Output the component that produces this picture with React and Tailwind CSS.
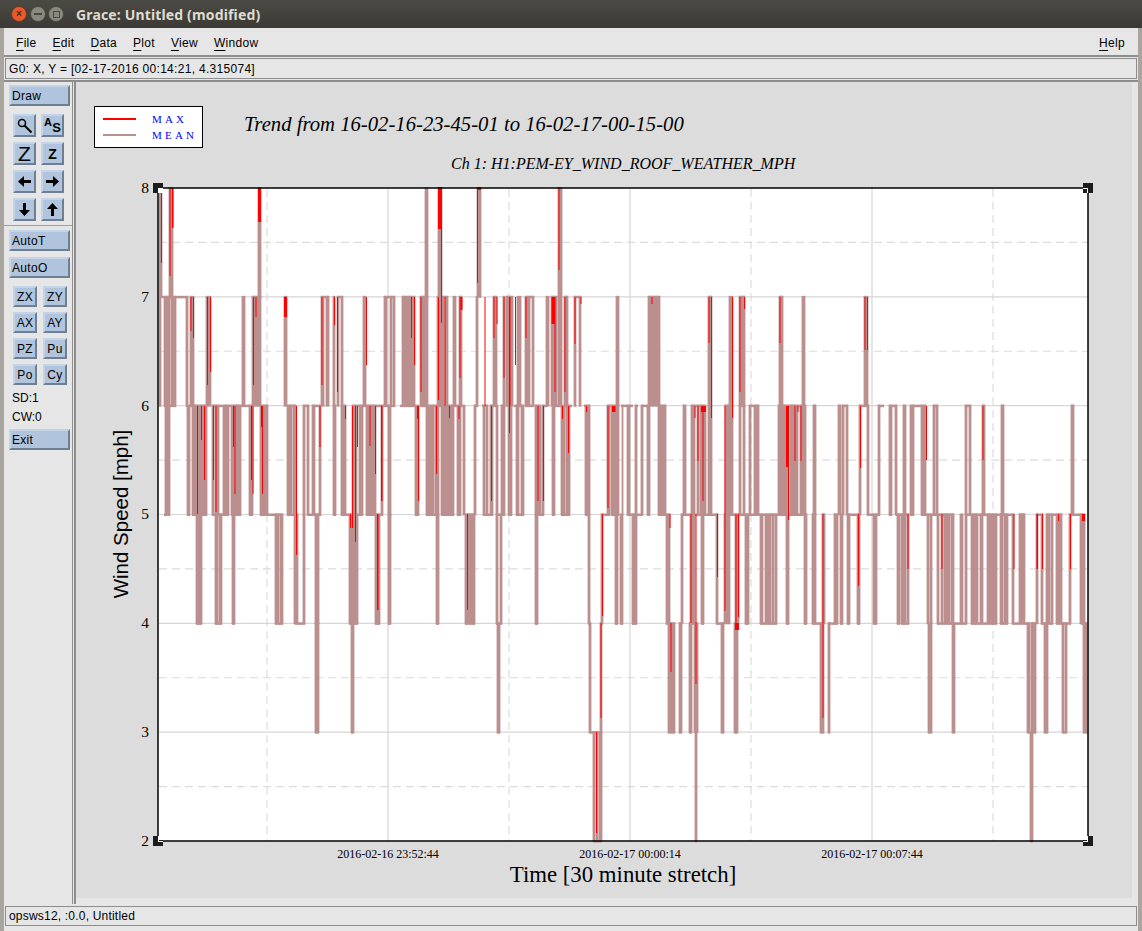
const sans = "font-['Liberation_Sans',Arial,sans-serif]";
const serif = "'Liberation Serif', 'Times New Roman', serif";

const y = (v) => 188 + (8 - v) * 108.83;

// mean trace, vertical strokes per band: [upper, lower, [[x1, x2], ...]]
const bands = [
  [8, 7, [[159,162],[169,173],[258,261],[425,428],[438,442],[477,481],[558,562]]],
  [7, 6, [[159,161],[164,170],[171,176],[186,188],[190,194],[206,211],[242,245],[252,258],[258,261],[284,287],[321,324],[326,329],[333,335],[337,339],[341,343],[363,366],[384,387],[390,392],[393,395],[402,415],[420,428],[437,444],[445,448],[453,456],[459,462],[476,478],[493,497],[503,505],[506,513],[517,521],[525,530],[532,534],[546,549],[551,557],[558,562],[564,568],[574,576],[579,581],[616,619],[648,660],[708,712],[729,733],[739,745],[779,783],[802,805],[864,868]]],
  [6, 5, [[165,170],[187,190],[192,196],[196,207],[212,214],[215,219],[223,229],[231,237],[237,241],[249,253],[260,268],[287,292],[293,296],[303,305],[307,309],[312,315],[319,321],[333,336],[341,346],[352,357],[359,363],[366,369],[369,376],[381,383],[388,391],[415,419],[426,434],[435,439],[441,447],[447,454],[457,461],[463,465],[474,476],[483,485],[486,488],[490,493],[496,498],[501,505],[508,512],[516,519],[521,524],[535,541],[542,544],[552,555],[561,565],[566,570],[585,590],[607,610],[611,619],[622,623],[627,630],[635,637],[641,643],[647,650],[658,666],[683,686],[691,695],[697,699],[700,706],[708,712],[725,733],[739,741],[743,745],[749,751],[754,759],[778,782],[782,789],[790,798],[800,803],[803,806],[813,816],[838,841],[842,844],[846,848],[859,861],[867,869],[878,880],[889,892],[895,897],[903,906],[910,914],[921,926],[933,935],[936,938],[965,967],[969,971],[982,985],[1001,1004],[1071,1074]]],
  [5, 4, [[196,202],[215,218],[219,222],[232,235],[275,279],[280,283],[294,298],[303,305],[315,319],[349,352],[352,358],[375,380],[388,391],[436,439],[465,475],[496,498],[500,502],[535,538],[588,590],[601,603],[615,618],[620,623],[632,637],[666,670],[681,683],[690,695],[701,704],[716,718],[724,730],[735,739],[745,749],[760,763],[765,771],[772,774],[775,777],[786,789],[804,807],[812,816],[822,825],[834,838],[840,843],[847,850],[857,860],[873,877],[897,900],[901,906],[907,909],[927,929],[930,932],[937,939],[941,943],[944,950],[951,954],[960,963],[965,967],[971,974],[974,978],[980,983],[987,997],[1000,1003],[1004,1008],[1012,1014],[1019,1025],[1036,1038],[1041,1043],[1046,1050],[1051,1053],[1056,1062],[1069,1071],[1080,1085]]],
  [4, 3, [[315,319],[351,354],[497,500],[589,591],[600,602],[668,675],[679,682],[689,692],[694,698],[721,724],[734,738],[820,824],[828,830],[928,932],[952,955],[1027,1030],[1031,1036],[1044,1048],[1062,1064],[1065,1067],[1083,1087]]],
  [3, 2, [[593,595],[596,598],[599,602],[695,697],[1030,1033]]],
];

// mean trace, horizontal runs per level
const runs = [
  [7, [[162,188],[252,258],[321,329],[337,343],[384,395],[402,415],[420,428],[437,447],[459,462],[493,497],[506,513],[525,534],[551,557],[564,568],[574,581],[648,660],[708,712],[739,745],[779,783]]],
  [6, [[164,176],[186,207],[212,236],[236,253],[260,268],[287,296],[303,309],[312,321],[333,336],[341,346],[352,395],[400,415],[420,428],[428,463],[474,478],[482,488],[490,497],[501,505],[514,524],[525,534],[535,540],[542,547],[552,562],[564,572],[584,590],[607,617],[621,633],[635,638],[641,650],[658,666],[683,686],[691,706],[708,712],[724,733],[739,745],[749,759],[778,806],[813,816],[838,841],[842,848],[859,869],[878,884],[889,897],[903,906],[910,926],[933,938],[965,971],[982,985],[1001,1004],[1071,1074]]],
  [5, [[164,170],[187,190],[192,207],[212,229],[231,241],[249,253],[260,283],[287,296],[307,321],[333,336],[341,352],[354,363],[366,383],[388,391],[415,419],[426,439],[441,454],[457,461],[465,475],[483,493],[496,505],[508,512],[516,524],[535,544],[552,555],[561,570],[585,590],[601,610],[611,619],[627,643],[647,650],[658,670],[681,718],[724,807],[812,816],[822,825],[834,838],[840,843],[847,860],[867,880],[889,892],[896,909],[910,914],[921,954],[965,971],[972,1014],[1019,1025],[1036,1043],[1046,1062],[1069,1085]]],
  [4, [[196,202],[215,222],[232,235],[275,283],[295,305],[315,319],[349,358],[375,380],[388,391],[436,439],[465,475],[496,502],[535,538],[588,591],[601,603],[615,618],[620,623],[632,637],[666,675],[679,682],[689,698],[701,704],[716,724],[735,739],[745,749],[760,777],[786,789],[804,807],[812,824],[828,838],[840,843],[847,850],[857,860],[873,877],[897,900],[901,909],[928,932],[937,967],[971,997],[1000,1008],[1012,1030],[1031,1036],[1041,1053],[1056,1071],[1081,1087]]],
  [3, [[315,319],[351,354],[497,500],[589,602],[668,675],[679,682],[689,692],[721,724],[734,738],[820,824],[828,830],[928,932],[952,955],[1027,1036],[1044,1048],[1062,1067],[1083,1087]]],
  [2, [[593,602],[695,697],[1030,1033]]],
];

// max trace where it shows past the mean: [x, top, bottom, width]
const maxMarks = [
  [161,188,263,1],[169.5,188,276,1],[172,188,228,1.5],[258,188,222,3],[438,187,229,3],[441,187,323,1],[477,187,283,1],[478,187,190,3],[558.5,187,270,1],
  [190.5,297,331,1],[193,297,338,1],[207,297,385,1],[210,297,372,1],[253,297,385,1],[255.5,297,317,1],[284,297,317,3],[321.5,297,385,1],[334,297,325,1],[337,297,392,1],[366,297,365,1],
  [411,297,338,1],[414,297,365,1],[420.5,297,392,1],[438,297,400,1],[444.5,297,406,1],[460.5,297,310,2],[459.5,297,378,1],[484.5,297,406,1],[493.5,297,338,1],[496.5,297,324,1],[503.5,297,378,1],[509,297,406,1.5],[515,297,365,1],[525.5,297,338,1],[551.5,297,324,3.5],[554.5,297,392,1],[564.5,297,392,1],[574.5,297,344,1],[580.5,297,304,1],[651.5,297,304,1],
  [708.5,297,343,1],[711,297,418,1],[732,297,418,1],[739.5,297,392,1],[744,297,309,1],[779.5,297,343,1],[864.5,297,350,1],[867,297,350,1],
  [197,406,514,1],[201,406,440,1],[204,406,480,1],[213,406,480,1],[215.5,406,512,1],[233,406,447,1],[234.5,406,494,1],[251,406,480,1],[252.5,406,494,1],[261,406,427,1],[262,406,494,1],[296,406,555,1],[319.5,406,447,1],[345,406,419,1],[352,406,528,1],[355,406,542,1],[357,406,447,1],[369.5,406,446,1],[375,406,474,1],[381,406,501,1.5],[377,514,610,1.5],[350,514,528,1],
  [417,406,419,2],[418,406,501,1],[436,406,474,1],[449,406,418,1],[458.5,406,419,1],[491,406,501,1],[509,395,433,1],[537.5,406,501,1],[543,406,501,1],[562,406,419,1],[568,406,453,1],[586,406,412,1],[607.5,406,508,1],[612,406,412,3.5],[467,514,610,1],[602,514,616,1],[600.5,623,718,1],[596,732,833,1],
  [694.5,406,418,1],[697.5,406,461,1],[701,406,412,5],[702.5,406,501,1],[724.5,406,611,1],[786,406,467,2.5],[788,406,520,1],[794.5,406,461,1],[797.5,406,412,1],[800.5,406,461,1],[860,406,468,1],
  [669.5,514,528,1],[670.5,623,672,1],[690.5,514,623,1],[695.5,514,684,1],[717,514,577,1],[735.5,514,630,1],[735,623,630,4],[738,514,617,1],[822.5,514,718,1],[858,514,586,1],
  [926,406,460,1],[982.5,406,460,1],[907.5,514,569,1],[941.5,514,569,1],[1013.5,514,569,1],[1036.5,514,569,1.5],[1042,514,569,1],[1070,514,569,1],[1058,514,521,1],[1082,514,521,3],
];

const tickLabels = ["2016-02-16 23:52:44", "2016-02-17 00:00:14", "2016-02-17 00:07:44"];

function Handle({ x, y: cy, corner }) {
  // selection handle, border lines inverted inside it
  const ix = corner === "tl" || corner === "bl" ? x + 6 : x;
  const iy = corner === "tl" || corner === "tr" ? cy + 6 : cy;
  const lineX = corner === "tl" || corner === "bl" ? x + 5 : x + 4;
  const lineY = cy + 5;
  const inside = corner === "tr" ? "#1c1c1c" : "#ffffff";
  return (
    <g>
      <rect x={x} y={cy} width="10" height="10" fill="#1c1c1c" />
      <rect x={ix} y={iy} width="4" height="4" fill={inside} />
      <rect x={lineX} y={corner === "tl" || corner === "tr" ? cy + 5 : cy} width="1" height="5" fill="#fff" />
      <rect x={corner === "tl" || corner === "bl" ? x + 5 : x} y={lineY} width="5" height="1" fill="#fff" />
    </g>
  );
}

function Plot() {
  return (
    <svg viewBox="76 82 1056 816" className="block w-[1056px] h-[816px]">
      <rect x="94.5" y="106.5" width="108" height="41" fill="#fff" stroke="#000" strokeWidth="1" />
      <rect x="103" y="118" width="33" height="2" fill="#f00" />
      <rect x="103" y="134" width="33" height="2" fill="#bc8f8f" />
      <text x="152" y="123" fontFamily={serif} fontSize="11" letterSpacing="3.2" fill="#0000ff">MAX</text>
      <text x="152" y="139" fontFamily={serif} fontSize="11" letterSpacing="3.2" fill="#0000ff">MEAN</text>
      <text x="244" y="131" fontFamily={serif} fontSize="20.7" fontStyle="italic" fill="#000">
        Trend from 16-02-16-23-45-01 to 16-02-17-00-15-00
      </text>
      <text x="451" y="169" fontFamily={serif} fontSize="16" fontStyle="italic" fill="#000">
        Ch 1: H1:PEM-EY_WIND_ROOF_WEATHER_MPH
      </text>

      <rect x="158" y="188" width="930" height="653" fill="#fff" />
      {[7.5, 6.5, 5.5, 4.5, 3.5, 2.5].map((v) => (
        <line key={v} x1="159" x2="1088" y1={y(v)} y2={y(v)} stroke="#dcdcdc" strokeWidth="1.2" strokeDasharray="8 5" />
      ))}
      {[267, 509, 751, 993].map((x) => (
        <line key={x} x1={x} x2={x} y1="189" y2="841" stroke="#dcdcdc" strokeWidth="1.2" strokeDasharray="8 5" />
      ))}
      {[7, 6, 5, 4, 3].map((v) => (
        <line key={v} x1="159" x2="1088" y1={y(v)} y2={y(v)} stroke="#d6d6d6" strokeWidth="1.2" />
      ))}
      {[388, 630, 872].map((x) => (
        <line key={x} x1={x} x2={x} y1="189" y2="841" stroke="#d6d6d6" strokeWidth="1.2" />
      ))}

      {bands.map(([top, bottom, bars]) =>
        bars.map(([x1, x2]) => (
          <rect key={`${top}-${x1}`} x={x1 - 0.4} y={y(top) - 1} width={x2 - x1 + 0.8} height={y(bottom) - y(top) + 2} fill="#bc8f8f" />
        ))
      )}
      {runs.map(([v, spans]) =>
        spans.map(([x1, x2]) => (
          <rect key={`${v}-${x1}`} x={x1} y={y(v) - 1} width={x2 - x1} height="2.5" fill="#bc8f8f" />
        ))
      )}
      {maxMarks.map(([x, top, bottom, w], i) => (
        <rect key={i} x={x} y={top} width={w} height={bottom - top} fill="#f00" />
      ))}

      <rect x="158" y="188" width="930" height="653" fill="none" stroke="#000" strokeWidth="1.5" />
      <Handle x={153} y={183} corner="tl" />
      <Handle x={1083} y={183} corner="tr" />
      <Handle x={153} y={836} corner="bl" />
      <Handle x={1083} y={836} corner="br" />

      {[8, 7, 6, 5, 4, 3, 2].map((v) => (
        <text key={v} x="149" y={y(v) + 5} textAnchor="end" fontFamily={serif} fontSize="15.5" fill="#000">{v}</text>
      ))}
      {tickLabels.map((t, i) => (
        <text key={t} x={388 + i * 242} y="858" textAnchor="middle" fontFamily={serif} fontSize="12" fill="#000">{t}</text>
      ))}
      <text x="623" y="882" textAnchor="middle" fontFamily={serif} fontSize="22.8" fill="#000">
        Time [30 minute stretch]
      </text>
      <text
        transform="translate(128 514) rotate(-90)"
        textAnchor="middle"
        fontFamily="'Liberation Sans', Arial, sans-serif"
        fontSize="20.5"
        fill="#000"
      >
        Wind Speed [mph]
      </text>
    </svg>
  );
}

const bevel = "bg-[#b0c4de] border-2 border-t-[#c4d4e8] border-l-[#c4d4e8] border-r-[#6e7f93] border-b-[#6e7f93]";

function TextButton({ label, mt }) {
  return (
    <div className={`${bevel} ${mt} w-[61px] h-[21px] flex items-center pl-px text-[12px] leading-none tracking-[0.3px] text-black`}>
      {label}
    </div>
  );
}

function IconButton({ children }) {
  return (
    <div className={`${bevel} w-[23px] h-[23px] flex items-center justify-center text-black`}>
      {children}
    </div>
  );
}

function SmallButton({ label }) {
  return (
    <div className={`${bevel} w-[24px] h-[21px] flex items-center justify-center text-[12px] leading-none tracking-[0.3px] text-black`}>
      {label}
    </div>
  );
}

function Arrow({ dir }) {
  const rot = { left: 0, right: 180, down: 270, up: 90 }[dir];
  return (
    <svg width="15" height="15" viewBox="0 0 15 15" style={{ transform: `rotate(${rot}deg)` }}>
      <path d="M1 7.5 L7 2 V6 H14 V9 H7 V13 Z" fill="#000" />
    </svg>
  );
}

function ToolPanel() {
  return (
    <div className={`${sans} w-[69px] shrink-0 flex flex-col border-r border-r-[#8c8c8c] pt-[3px] text-[12px]`}>
      <div className="pl-[5px]"><TextButton label="Draw" mt="" /></div>
      <div className="grid grid-cols-[23px_23px] gap-x-[5px] gap-y-[5px] pl-[9px] mt-[8px]">
        <IconButton>
          <svg width="17" height="17" viewBox="0 0 17 17" fill="none" stroke="#000">
            <circle cx="6" cy="6" r="3.5" strokeWidth="1.5" />
            <path d="M8.5 8.5 L15.5 15.5" strokeWidth="2" />
          </svg>
        </IconButton>
        <IconButton>
          <span className="relative block w-[17px] h-[17px] font-bold leading-none">
            <span className="absolute left-0 top-0 text-[11px]">A</span>
            <span className="absolute right-0 bottom-0 text-[13px]">S</span>
          </span>
        </IconButton>
        <IconButton><span className="text-[21px] leading-none">Z</span></IconButton>
        <IconButton><span className="text-[14px] font-bold leading-none">Z</span></IconButton>
        <IconButton><Arrow dir="left" /></IconButton>
        <IconButton><Arrow dir="right" /></IconButton>
        <IconButton><Arrow dir="down" /></IconButton>
        <IconButton><Arrow dir="up" /></IconButton>
      </div>
      <div className="h-px bg-[#8c8c8c] mt-[4px] opacity-80" />
      <div className="pl-[5px]">
        <TextButton label="AutoT" mt="mt-[4px]" />
        <TextButton label="AutoO" mt="mt-[6px]" />
      </div>
      <div className="grid grid-cols-[24px_24px] gap-x-[6px] gap-y-[5px] pl-[9px] mt-[8px]">
        {["ZX", "ZY", "AX", "AY", "PZ", "Pu", "Po", "Cy"].map((label) => (
          <SmallButton key={label} label={label} />
        ))}
      </div>
      <div className="pl-[8px] mt-[4px] leading-[19px] text-black">SD:1</div>
      <div className="pl-[8px] leading-[19px] text-black">CW:0</div>
      <div className="pl-[5px]"><TextButton label="Exit" mt="mt-[2px]" /></div>
    </div>
  );
}

function Mnemonic({ text }) {
  return (
    <span>
      <span className="underline underline-offset-[3px]">{text[0]}</span>
      {text.slice(1)}
    </span>
  );
}

export default function App() {
  return (
    <div className={`${sans} w-[1142px] h-[931px] overflow-hidden flex flex-col bg-[#a8a59e]`}>
      <div className="h-[28px] shrink-0 flex items-center bg-gradient-to-b from-[#4b4a44] to-[#3b3a36]">
        <div className="w-[16px] h-[16px] ml-[11px] rounded-full bg-[#e9592c] border border-[#6b3a25] flex items-center justify-center text-[10px] leading-none font-bold text-[#4a2412]">×</div>
        <div className="w-[16px] h-[16px] ml-[3px] rounded-full bg-[#8b8880] border border-[#4a4944] flex items-center justify-center">
          <span className="w-[8px] h-[2px] bg-[#4a4944]" />
        </div>
        <div className="w-[16px] h-[16px] ml-[2px] rounded-full bg-[#8b8880] border border-[#4a4944] flex items-center justify-center">
          <span className="w-[7px] h-[7px] border border-[#4a4944]" />
        </div>
        <div className="ml-[12px] font-['Noto_Sans',sans-serif] text-[14px] font-bold tracking-[0.15px] text-[#dfdbd2]">Grace: Untitled (modified)</div>
      </div>

      <div className="mx-[4px] flex-1 flex flex-col bg-[#e6e6e6] text-black min-h-0">
        <div className="h-[29px] shrink-0 flex items-center gap-[16px] pl-[12px] pr-[13px] pt-[2px] text-[12px] tracking-[0.3px] border-b-2 border-b-[#8c8c8c]">
          {["File", "Edit", "Data", "Plot", "View", "Window"].map((m) => (
            <Mnemonic key={m} text={m} />
          ))}
          <span className="ml-auto"><Mnemonic text="Help" /></span>
        </div>
        <div className="h-[21px] shrink-0 mx-px mt-[1px] flex items-center pl-[3px] text-[12px] tracking-[0.3px] border border-[#8c8c8c]">
          G0: X, Y = [02-17-2016 00:14:21, 4.315074]
        </div>
        <div className="flex-1 min-h-0 flex mt-[1px] border-t-2 border-t-[#8c8c8c]">
          <ToolPanel />
          <div className="flex-1 min-w-0 flex pb-[5px] pr-[5px] border-l-2 border-l-[#8c8c8c] ml-px">
            <div className="w-[1056px] h-[816px] bg-[#dcdcdc]">
              <Plot />
            </div>
          </div>
        </div>
        <div className="h-[20px] shrink-0 mt-[2px] mx-px flex items-center pl-[3px] text-[12px] tracking-[0.2px] border border-[#8c8c8c]">
          opsws12, :0.0, Untitled
        </div>
        <div className="h-[5px] shrink-0" />
      </div>
    </div>
  );
}
